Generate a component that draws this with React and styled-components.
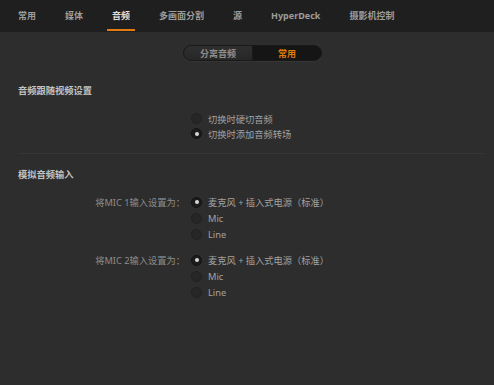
import React from "react";
import styled, { createGlobalStyle } from "styled-components";

const GlobalStyle = createGlobalStyle`
	html, body {
		margin: 0;
		padding: 0;
		background: #2d2d2d;
	}
	body {
		font-family: "Noto Sans", "Noto Sans CJK SC", sans-serif;
		-webkit-font-smoothing: antialiased;
	}
`;

const tabs = ["常用", "媒体", "音频", "多画面分割", "源", "HyperDeck", "摄影机控制"];

const groups = [
	{ label: "将MIC 1输入设置为：", options: ["麦克风 + 插入式电源（标准）", "Mic", "Line"], selected: 0 },
	{ label: "将MIC 2输入设置为：", options: ["麦克风 + 插入式电源（标准）", "Mic", "Line"], selected: 0 },
];

const App = () => {
	return (
		<Page>
			<GlobalStyle />
			<TabBar>
				{tabs.map((t) => (
					<Tab key={t} $active={t === "音频"}>
						{t}
					</Tab>
				))}
			</TabBar>
			<SegmentRow>
				<Segmented>
					<Segment>分离音频</Segment>
					<Segment $active>常用</Segment>
				</Segmented>
			</SegmentRow>

			<Heading $top={24}>音频跟随视频设置</Heading>
			<OptionGrid $top={14} $row={15}>
				<FieldLabel />
				<Radio />
				<OptionText>切换时硬切音频</OptionText>
				<FieldLabel />
				<Radio $checked />
				<OptionText>切换时添加音频转场</OptionText>
			</OptionGrid>

			<Divider />

			<Heading $top={15}>模拟音频输入</Heading>
			{groups.map((g, gi) => (
				<OptionGrid key={g.label} $top={gi === 0 ? 13 : 10} $row={16}>
					{g.options.map((o, i) => (
						<React.Fragment key={o}>
							<FieldLabel>{i === 0 ? g.label : ""}</FieldLabel>
							<Radio $checked={i === g.selected} />
							<OptionText>{o}</OptionText>
						</React.Fragment>
					))}
				</OptionGrid>
			))}
		</Page>
	);
};

const Page = styled.div`
	min-height: 100vh;
	background: #2d2d2d;
	display: flex;
	flex-direction: column;
`;

const TabBar = styled.nav`
	height: 32px;
	background: #1f1f1f;
	display: flex;
	align-items: stretch;
	padding-left: 3.5px;
	box-sizing: border-box;
`;

const Tab = styled.div`
	position: relative;
	padding: 0 14.5px;
	display: flex;
	align-items: center;
	padding-bottom: 1px;
	font-size: 9px;
	font-weight: 700;
	color: ${(p) => (p.$active ? "#dedede" : "#9c9c9c")};
	&::after {
		content: "";
		display: ${(p) => (p.$active ? "block" : "none")};
		position: absolute;
		left: 9.5px;
		right: 9.5px;
		bottom: 1px;
		height: 2px;
		background: #e37a12;
	}
`;

const SegmentRow = styled.div`
	display: flex;
	justify-content: center;
	padding: 13px 0 0 11px;
`;

const Segmented = styled.div`
	display: flex;
	width: 139px;
	height: 16px;
	border-radius: 8px;
	border: 1px solid #191919;
	box-sizing: border-box;
	overflow: hidden;
	background: #161616;
	box-shadow: 0 1px 0 rgba(255, 255, 255, 0.04);
`;

const Segment = styled.div`
	flex: 1;
	display: flex;
	align-items: center;
	justify-content: center;
	font-size: 9px;
	font-weight: 700;
	color: ${(p) => (p.$active ? "#e07b0c" : "#8e8e8e")};
	background: ${(p) => (p.$active ? "#151515" : "linear-gradient(#2f2f2f, #272727)")};
	border-right: ${(p) => (p.$active ? "none" : "1px solid #1a1a1a")};
`;

const Heading = styled.h2`
	margin: ${(p) => p.$top}px 0 0;
	padding-left: 18px;
	font-size: 9.25px;
	line-height: 12px;
	font-weight: 700;
	color: #c2c2c2;
`;

const OptionGrid = styled.div`
	margin-top: ${(p) => p.$top}px;
	display: grid;
	grid-template-columns: 191px 11px 1fr;
	grid-auto-rows: ${(p) => p.$row}px;
	align-items: center;
`;

const FieldLabel = styled.div`
	text-align: right;
	padding-right: 6px;
	font-size: 9.25px;
	color: #8c8c8c;
	white-space: nowrap;
`;

const Radio = styled.span`
	position: relative;
	width: 11px;
	height: 11px;
	border-radius: 50%;
	box-sizing: border-box;
	background: ${(p) => (p.$checked ? "#1c1c1c" : "#262626")};
	border: 1px solid ${(p) => (p.$checked ? "#121212" : "#222222")};
	&::after {
		content: "";
		display: ${(p) => (p.$checked ? "block" : "none")};
		position: absolute;
		left: 50%;
		top: 50%;
		width: 4px;
		height: 4px;
		margin: -2px 0 0 -2px;
		border-radius: 50%;
		background: #d6d6d6;
	}
`;

const OptionText = styled.div`
	padding-left: 6px;
	font-size: 9.25px;
	color: #a2a2a2;
	white-space: nowrap;
`;

const Divider = styled.hr`
	margin: 12px 10px 0 19px;
	border: none;
	height: 1px;
	background: #363636;
`;

export default App;
